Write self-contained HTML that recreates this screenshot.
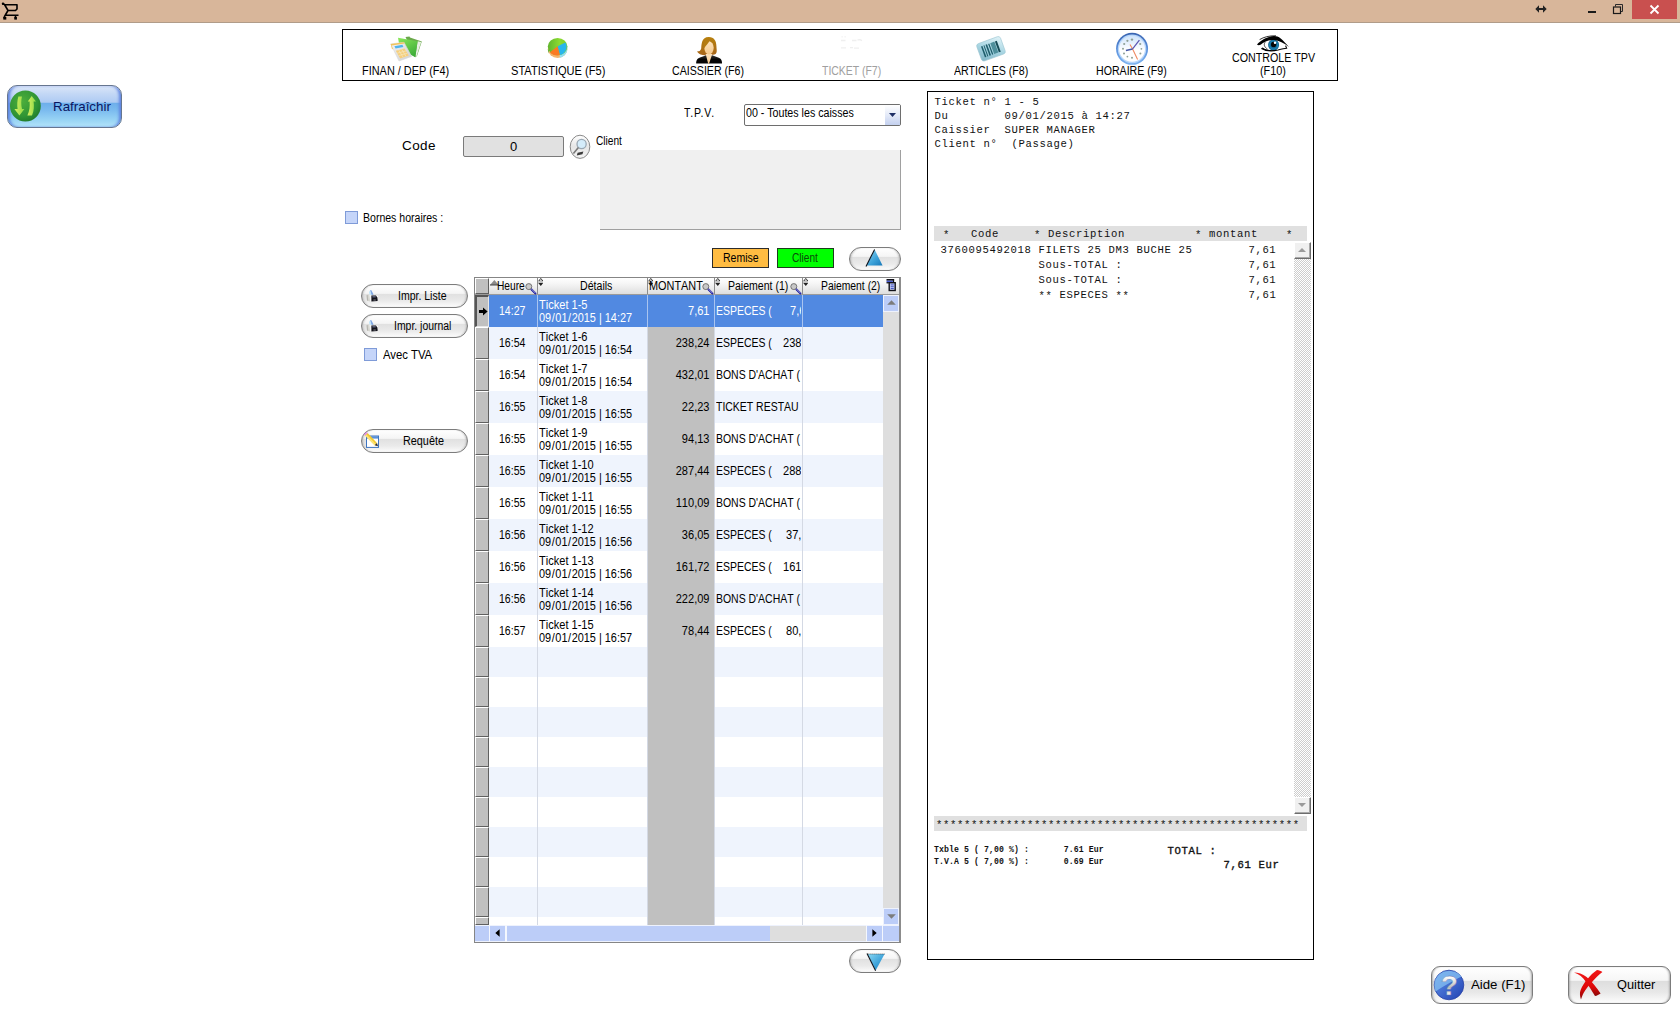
<!DOCTYPE html>
<html lang="fr">
<head>
<meta charset="utf-8">
<title>Tickets</title>
<style>
html,body{margin:0;padding:0;}
body{width:1680px;height:1010px;position:relative;overflow:hidden;background:#fff;
  font-family:"Liberation Sans",sans-serif;font-size:11px;color:#000;}
.abs{position:absolute;}
.t{position:absolute;white-space:pre;line-height:14px;transform-origin:0 50%;}
.tc{position:absolute;white-space:pre;line-height:14px;text-align:center;}
/* title bar */
#titlebar{position:absolute;left:0;top:0;width:1680px;height:22px;background:#d8b69a;border-bottom:1px solid #b09c89;}
#closebtn{position:absolute;left:1632px;top:0;width:45px;height:19px;background:#c9504f;}
/* toolbar */
#toolbar{position:absolute;left:342px;top:29px;width:994px;height:50px;border:1px solid #000;}
.tbl{position:absolute;white-space:pre;line-height:13px;font-size:11px;text-align:center;transform:translateX(-50%);}
/* pill buttons */
.pill{position:absolute;border:1px solid #7c7c7c;border-radius:13px;box-sizing:border-box;
  background:linear-gradient(#ffffff 0%,#f5f5f5 38%,#e1e1e1 43%,#eaeaea 72%,#fcfcfc 100%);
  box-shadow:inset 2px 0 2px -1px #b8b8b8,inset -2px 0 2px -1px #b8b8b8;}
.chk{position:absolute;width:11px;height:11px;border:1px solid #7f9bd8;background:#c5d5f9;}
/* grid */
#grid{position:absolute;left:474px;top:277px;width:424px;height:664px;border:1px solid #858585;border-right:2px solid #8c8c8c;background:#fff;overflow:hidden;}
.row{position:absolute;left:15px;width:394px;}
.rh{position:absolute;left:0;width:14px;background:#c0c0c0;box-sizing:border-box;border-top:1px solid #fff;border-left:1px solid #fff;border-right:1px solid #606060;border-bottom:1px solid #606060;}
.c{position:absolute;white-space:pre;line-height:13px;font-size:12px;transform:scaleX(0.92);transform-origin:0 50%;font-kerning:none;}
.cr{transform-origin:100% 50%;text-align:right;}
.sl{margin:0 .65px;}
/* receipt */
#receipt{position:absolute;left:927px;top:91px;width:385px;height:867px;border:1px solid #000;background:#fff;}
.s{position:relative;top:1.3px;}
.m{position:absolute;white-space:pre;font-family:"Liberation Mono",monospace;font-size:10.6px;letter-spacing:0.64px;line-height:14px;color:#111;}
</style>
</head>
<body>
<div id="titlebar">
  <svg class="abs" style="left:1px;top:2px" width="19" height="18" viewBox="0 0 19 18">
    <path d="M1.5 1.5 L3.5 2.5 L7 8.5 L3.5 14.5 L3 16.5 M3.5 2.8 H16 V7 L14.5 8.5 H7 M4.5 13.2 H17.5 M14.5 13.5 V16.8" fill="none" stroke="#000" stroke-width="1.6" stroke-linejoin="round"/>
    <rect x="2.3" y="15" width="3" height="2.6" fill="#000"/><rect x="13.3" y="15" width="2.6" height="2.6" fill="#000"/>
    <circle cx="2" cy="1.8" r="1.2" fill="#000"/>
  </svg>
  <svg class="abs" style="left:1535px;top:4px" width="12" height="10" viewBox="0 0 12 10">
    <path d="M0.3 5 L4 1.3 V3.9 H8 V1.3 L11.7 5 L8 8.7 V6.1 H4 V8.7 Z" fill="#222"/>
  </svg>
  <div class="abs" style="left:1588px;top:11px;width:8px;height:2px;background:#1a1a1a"></div>
  <svg class="abs" style="left:1612px;top:3px" width="12" height="12" viewBox="0 0 12 12">
    <path d="M3.5 3.5 V1.5 H10.5 V8.5 H8.5" fill="none" stroke="#2a2a2a" stroke-width="1"/>
    <rect x="1.5" y="4" width="7" height="6.5" fill="none" stroke="#1a1a1a" stroke-width="1.2"/>
  </svg>
  <div id="closebtn">
    <svg class="abs" style="left:17px;top:4px" width="11" height="11" viewBox="0 0 11 11"><path d="M1.5 1.5 L9.5 9.5 M9.5 1.5 L1.5 9.5" stroke="#fff" stroke-width="1.8" fill="none"/></svg>
  </div>
</div>
<div id="toolbar"></div>
<!-- finan icon: origin 380,30 -->
<svg class="abs" style="left:380px;top:30px" width="60" height="36" viewBox="0 0 60 36">
  <defs>
    <linearGradient id="gfold" x1="0" y1="0" x2="0.6" y2="1"><stop offset="0" stop-color="#8be85a"/><stop offset="1" stop-color="#3fae3a"/></linearGradient>
    <linearGradient id="gcalc" x1="0" y1="0" x2="1" y2="1"><stop offset="0" stop-color="#f4f4f4"/><stop offset="1" stop-color="#cfcfcf"/></linearGradient>
  </defs>
  <path d="M25.5 7 L29.5 6.6 L30 7.6 L41.8 11.6 L37 26 L35 27.3 Z" fill="#6aa84a"/>
  <path d="M37.6 11.3 L41.2 12 L36.8 25.6 L35.3 27 Z" fill="#e8efe4"/>
  <path d="M18 7.7 L37.6 11.3 L35.3 27.3 L33 26 L20 19 Z" fill="url(#gfold)"/>
  <path d="M10.7 13.9 L24 12.3 L31.6 26.4 L19 31 Z" fill="url(#gcalc)" stroke="#d8d8d8" stroke-width="0.6"/>
  <path d="M10.7 13.9 L24 12.3 L24.6 13.4 L11.6 15.4 L13 19 L12 19.3 Z" fill="#f2c45a"/>
  <path d="M14.4 16.2 L22.4 14.7 L23.4 17 L15.6 18.6 Z" fill="#4fb4ee"/>
  <path d="M15.8 20.8 L24.6 18.6 L28.8 25.4 L20.2 28.4 Z" fill="#f6cf7c"/>
  <path d="M17.2 23.2 L26 20.9 M18.7 25.6 L27.4 23.2 M18.7 20.1 L23.2 27.4 M21.7 19.3 L26 26.4" stroke="#f4e6c0" stroke-width="0.7" fill="none"/>
</svg>
<!-- pie icon: origin 535,32 -->
<svg class="abs" style="left:535px;top:32px" width="50" height="30" viewBox="0 0 50 30">
  <defs><linearGradient id="ggrn" x1="0" y1="0" x2="1" y2="0"><stop offset="0" stop-color="#5fb52e"/><stop offset="0.6" stop-color="#8cdb30"/><stop offset="1" stop-color="#7acc2c"/></linearGradient></defs>
  <ellipse cx="22.6" cy="16.9" rx="9.8" ry="9" fill="#f4b46c"/>
  <path d="M24.8 25.8 A9.8 9 0 0 0 32.4 16.9 L32.4 14 L24.8 22 Z" fill="#93e0f0"/>
  <path d="M12.8 16.9 A9.8 9 0 0 0 14 21.4 L14 18 Z" fill="#6aae3a"/>
  <ellipse cx="22.6" cy="14.6" rx="9.8" ry="8.7" fill="url(#ggrn)"/>
  <path d="M22.6 14.2 L30.4 10.6 A9.8 8.7 0 0 1 24.8 23.1 Z" fill="#29b6ec"/>
  <path d="M22.6 14.2 L24.8 23.1 A9.8 8.7 0 0 1 15 20.2 Z" fill="#fb7a22"/>
</svg>
<!-- woman icon: origin 684,32 -->
<svg class="abs" style="left:684px;top:32px" width="50" height="34" viewBox="0 0 50 34">
  <defs>
    <linearGradient id="ghair" x1="0" y1="0" x2="0" y2="1"><stop offset="0" stop-color="#b8810e"/><stop offset="1" stop-color="#a8661a"/></linearGradient>
    <linearGradient id="gskin" x1="0" y1="0" x2="0" y2="1"><stop offset="0" stop-color="#fde2bd"/><stop offset="1" stop-color="#f5c98c"/></linearGradient>
    <linearGradient id="gsuit" x1="0" y1="0" x2="0" y2="1"><stop offset="0" stop-color="#3a3a3a"/><stop offset="0.5" stop-color="#050505"/></linearGradient>
  </defs>
  <path d="M24.6 5 C30 4.8 32.4 9 32.4 14 C32.6 18 33.4 20 31.6 22 C29 23.4 26 23 24 23 C21 23.4 18.6 23.2 16.6 22.4 C14.6 21.6 13.6 20.4 13.2 19.2 C15 19.6 16.6 18.6 17.2 16.4 C17.6 12 17.6 5.2 24.6 5 Z" fill="url(#ghair)"/>
  <path d="M12.2 31.6 C12 29.6 12.6 27.6 14 26.4 C16.6 25 19.6 24.2 22 23.2 L28.2 23.2 C30.6 24.2 33.6 25 36.2 26.4 C37.6 27.6 38.2 29.6 38 31.6 Z" fill="url(#gsuit)"/>
  <path d="M21.6 22 L28.4 22 L27.6 24 L25 31.8 L24.2 31.8 L22.2 24 Z" fill="url(#gskin)"/>
  <ellipse cx="25" cy="15.8" rx="4.7" ry="6.6" fill="url(#gskin)"/>
  <path d="M20 16.6 C19.2 12 20.4 8 24.2 7 C27 6.8 29 8 30.2 12 C28 10.4 26.4 9.4 25.6 8.8 C24.4 11 22.4 13 20 16.6 Z" fill="#b47c12"/>
</svg>
<!-- ticket (disabled) icon faint -->
<svg class="abs" style="left:838px;top:34px" width="28" height="18" viewBox="0 0 28 18">
  <path d="M3 6.5 H7.5 M14 6.5 H18.5 M19.5 6 L22 5.6 L24 6.6 M3 13.9 H8 M12 13.6 H15 M16 14.2 H21" stroke="#efefef" stroke-width="1.3" fill="none"/>
  <path d="M3.4 2.8 H5 M6.4 2.8 H8" stroke="#f6f6f6" stroke-width="1.4" fill="none"/>
</svg>
<!-- barcode icon: origin 966,30 -->
<svg class="abs" style="left:966px;top:30px" width="50" height="36" viewBox="0 0 50 36">
  <defs><linearGradient id="gbar" x1="1" y1="0" x2="0" y2="1"><stop offset="0" stop-color="#e4f5fa"/><stop offset="0.5" stop-color="#a9d6e3"/><stop offset="1" stop-color="#7fb4c6"/></linearGradient></defs>
  <g transform="translate(25 18.8) rotate(-20)">
    <rect x="-12.6" y="-9.2" width="25.2" height="18.4" rx="2.6" fill="url(#gbar)" stroke="#9cc6d2" stroke-width="0.6"/>
    <g fill="#1d5d6b">
      <rect x="-8.6" y="-5.6" width="1.5" height="11.6"/><rect x="-6" y="-5.6" width="1" height="11.6"/>
      <rect x="-3.8" y="-5.6" width="1.6" height="11.6"/><rect x="-1" y="-5.6" width="1.2" height="11.6"/>
      <rect x="1.2" y="-5.6" width="4.4" height="11.6" fill="#4e8f9c"/><rect x="6.2" y="-5.6" width="2" height="11.6" fill="#174c58"/>
    </g>
  </g>
</svg>
<!-- clock icon: origin 1108,30 -->
<svg class="abs" style="left:1108px;top:30px" width="50" height="36" viewBox="0 0 50 36">
  <defs>
    <linearGradient id="gring" x1="0" y1="0" x2="0" y2="1"><stop offset="0" stop-color="#3863b0"/><stop offset="0.5" stop-color="#5a90dc"/><stop offset="1" stop-color="#7db4f0"/></linearGradient>
    <linearGradient id="gface" x1="0" y1="0" x2="0" y2="1"><stop offset="0" stop-color="#cfe4fb"/><stop offset="0.55" stop-color="#ffffff"/></linearGradient>
  </defs>
  <circle cx="24.05" cy="18.85" r="16" fill="url(#gring)"/>
  <circle cx="24.05" cy="18.85" r="14.3" fill="#b7d6fa"/>
  <circle cx="24.05" cy="18.85" r="13" fill="url(#gface)"/>
  <g fill="#8fa096">
    <circle cx="24" cy="9.6" r="1.2"/><circle cx="19.4" cy="10.8" r="1.1"/><circle cx="16.2" cy="14" r="1.1"/><circle cx="15" cy="18.8" r="1"/>
    <circle cx="16" cy="23.4" r="1"/><circle cx="19.4" cy="26.6" r="0.9"/><circle cx="24" cy="27.8" r="1"/><circle cx="32.4" cy="23.6" r="1"/>
    <circle cx="33.4" cy="18.8" r="0.9"/><circle cx="32.2" cy="14" r="1.1"/>
  </g>
  <path d="M22 14.4 L24.6 19 L29.6 29.6" stroke="#f08a62" stroke-width="1.1" fill="none"/>
  <path d="M24.6 18.9 L17.9 20.4" stroke="#4657a6" stroke-width="1.5" fill="none"/>
  <path d="M24.6 18.9 L31.4 10.2" stroke="#5a52b0" stroke-width="1.2" fill="none"/>
</svg>
<!-- eye icon: origin 1248,30 -->
<svg class="abs" style="left:1248px;top:30.7px" width="50" height="24" viewBox="0 0 50 24">
  <defs><radialGradient id="giris" cx="0.5" cy="0.5" r="0.5"><stop offset="0.35" stop-color="#0b4f78"/><stop offset="0.75" stop-color="#1b83b4"/><stop offset="1" stop-color="#0c5a86"/></radialGradient></defs>
  <circle cx="25.6" cy="14" r="5.5" fill="url(#giris)"/>
  <circle cx="25.6" cy="13.4" r="2.6" fill="#050505"/>
  <circle cx="27" cy="11.8" r="1.2" fill="#fff"/>
  <path d="M9 13.4 C13 9.4 19 5.4 26 5 C31 5 34 8 41 16 C36 12 31 9.4 26 9 C20 8.8 16 11 12.6 13.8 C11 14.4 9.6 14.2 9 13.4 Z" fill="#000"/>
  <path d="M11.6 8.6 C16 6 21 4.6 28 4.8" stroke="#000" stroke-width="0.8" fill="none"/>
  <path d="M17.6 10.6 C15.4 13 16 16 19.4 18" stroke="#222" stroke-width="0.8" fill="none"/>
  <path d="M13.4 17.4 C18 20 24 20.4 30 19 C33 18.2 36 17.4 38.6 17.2 L37.6 14.6" stroke="#000" stroke-width="1.1" fill="none"/>
  <path d="M13.4 17.2 C17 20.4 24 20.6 28 19.4 C23 19.6 18 19 14.6 16.6 Z" fill="#000"/>
</svg>
<div class="t" id="tb1" style="left:361.89px;top:64px;font-size:12px;transform:scaleX(0.9101)">FINAN / DEP (F4)</div>
<div class="t" id="tb2" style="left:511.25px;top:64px;font-size:12px;transform:scaleX(0.9233)">STATISTIQUE (F5)</div>
<div class="t" id="tb3" style="left:672.35px;top:64px;font-size:12px;transform:scaleX(0.8860)">CAISSIER (F6)</div>
<div class="t" id="tb4" style="left:821.62px;top:64px;font-size:12px;color:#a0a0a0;transform:scaleX(0.8722)">TICKET (F7)</div>
<div class="t" id="tb5" style="left:954.23px;top:64px;font-size:12px;transform:scaleX(0.8867)">ARTICLES (F8)</div>
<div class="t" id="tb6" style="left:1096.49px;top:64px;font-size:12px;transform:scaleX(0.8838)">HORAIRE (F9)</div>
<div class="t" id="tb7" style="left:1231.57px;top:51px;font-size:12px;transform:scaleX(0.8915)">CONTROLE TPV</div>
<div class="t" id="tb8" style="left:1259.70px;top:64px;font-size:12px;transform:scaleX(0.9065)">(F10)</div>
<div class="abs" id="refresh" style="left:7px;top:85px;width:115px;height:43px;box-sizing:border-box;border:1px solid #66768f;border-radius:10px;
  background:linear-gradient(#dbe6f8 0%,#c2d7f5 20%,#aecbf3 40%,#6daeea 41%,#7cbcef 60%,#9bd6f5 85%,#b4e4f9 100%);
  box-shadow:inset 3px 0 3px -1px #5f84e0,inset -3px 0 3px -1px #5f84e0,inset 0 1px 0 #eef3fb;">
  <svg class="abs" style="left:1px;top:3px" width="36" height="36" viewBox="0 0 36 36">
    <defs><radialGradient id="ggc" cx="0.4" cy="0.35" r="0.7"><stop offset="0" stop-color="#4cae3c"/><stop offset="0.7" stop-color="#2f9434"/><stop offset="1" stop-color="#1f7a2a"/></radialGradient>
    <linearGradient id="garr" x1="0" y1="0" x2="1" y2="0"><stop offset="0" stop-color="#d6f060"/><stop offset="1" stop-color="#8ed848"/></linearGradient></defs>
    <circle cx="16.4" cy="17" r="15.4" fill="url(#ggc)"/>
    <path d="M9.4 7.4 L13 7.4 C12 11 12 16 13 20 L15.4 20 L10.4 26.4 L5.4 20 L8.6 20 C8 16 8.2 11 9.4 7.4 Z" fill="url(#garr)"/>
    <path d="M22.7 7 L27 12.4 L24.6 12.4 C25.2 17 25 22 23 26.4 L18.4 26.4 C20.6 22 21 17 20.6 12.4 L18.8 12.4 Z" fill="url(#garr)"/>
  </svg>
  <div class="t" id="t_raf" style="left:45.10px;top:13px;font-size:13px;color:#0b155f;line-height:15px;transform:scaleX(1.0263)">Rafraîchir</div>
</div>
<div class="pill" style="left:361px;top:284px;width:107px;height:24px"><svg class="abs" style="left:3px;top:4px" width="16" height="16" viewBox="0 0 16 16">
    <path d="M5 1.6 L6.2 1 L8.6 5.6 L6.6 6.2 Z" fill="#7fa6e4"/><path d="M4 3 L5 1.6 L6.6 6.2 L4.6 6 Z" fill="#bfe4f8"/>
    <path d="M1.6 6.2 L4.4 5.6 L5.2 12.4 L2 11.6 Z" fill="#d6d6d0"/><path d="M1.6 6.2 L2.6 5.8 L3.2 11.8 L2 11.6 Z" fill="#b4b4ae"/>
    <path d="M4.4 5.6 L6.6 6.2 L6.4 12.6 L5.2 12.4 Z" fill="#f2f2f2"/>
    <path d="M6.4 6.6 L11 6.4 L12.6 8.4 L12.6 12 L6.4 12.6 Z" fill="#14141c"/>
    <path d="M7.4 7 L10.6 6.9 L10.8 8.4 L7.4 8.6 Z" fill="#5a5f78"/>
    <rect x="8.4" y="10.4" width="2.4" height="1.2" fill="#6a6a72"/>
    <path d="M11 6.2 L13 7 L13 10.4 L12.6 8.4 Z" fill="#fff"/>
  </svg>
  <div class="t" id="t_il" style="left:35.92px;top:4px;font-size:12px;transform:scaleX(0.8758)">Impr. Liste</div>
</div>
<div class="pill" style="left:361px;top:314px;width:107px;height:24px"><svg class="abs" style="left:3px;top:4px" width="16" height="16" viewBox="0 0 16 16">
    <path d="M5 1.6 L6.2 1 L8.6 5.6 L6.6 6.2 Z" fill="#7fa6e4"/><path d="M4 3 L5 1.6 L6.6 6.2 L4.6 6 Z" fill="#bfe4f8"/>
    <path d="M1.6 6.2 L4.4 5.6 L5.2 12.4 L2 11.6 Z" fill="#d6d6d0"/><path d="M1.6 6.2 L2.6 5.8 L3.2 11.8 L2 11.6 Z" fill="#b4b4ae"/>
    <path d="M4.4 5.6 L6.6 6.2 L6.4 12.6 L5.2 12.4 Z" fill="#f2f2f2"/>
    <path d="M6.4 6.6 L11 6.4 L12.6 8.4 L12.6 12 L6.4 12.6 Z" fill="#14141c"/>
    <path d="M7.4 7 L10.6 6.9 L10.8 8.4 L7.4 8.6 Z" fill="#5a5f78"/>
    <rect x="8.4" y="10.4" width="2.4" height="1.2" fill="#6a6a72"/>
    <path d="M11 6.2 L13 7 L13 10.4 L12.6 8.4 Z" fill="#fff"/>
  </svg>
  <div class="t" id="t_ij" style="left:31.92px;top:4px;font-size:12px;transform:scaleX(0.8694)">Impr. journal</div>
</div>
<div class="chk" style="left:364px;top:348px"></div>
<div class="t" id="t_tva" style="left:382.89px;top:348px;font-size:12px;transform:scaleX(0.9455)">Avec TVA</div>
<div class="pill" style="left:361px;top:429px;width:107px;height:24px">
  <svg class="abs" style="left:1px;top:1px" width="20" height="20" viewBox="0 0 20 20">
    <rect x="3.5" y="5" width="12" height="11.4" fill="#fff" stroke="#3c74c0" stroke-width="1"/>
    <rect x="4" y="5.2" width="11" height="2.4" fill="#5a90d8"/>
    <path d="M2 4.4 L4.6 2 L14 12 L11.6 14.2 Z" fill="#f4c92e"/>
    <path d="M2 4.4 L3.3 3.2 L12.8 13.1 L11.6 14.2 Z" fill="#fbe47a"/>
    <path d="M1 3.2 L3.4 1 L4.6 2 L2 4.4 Z" fill="#e68ae0"/>
    <path d="M14 12 L15 15.2 L11.6 14.2 Z" fill="#2a2a2a"/>
  </svg>
  <div class="t" id="t_req" style="left:40.78px;top:4px;font-size:12px;transform:scaleX(0.9024)">Requête</div>
</div>
<div class="t" id="t_tpv" style="left:684.31px;top:106px;font-size:12px;letter-spacing:1px;transform:scaleX(0.8795)">T.P.V.</div>
<div class="abs" style="left:744px;top:104px;width:157px;height:22px;box-sizing:border-box;border:1px solid #6e6e6e;border-radius:2px;background:#fff">
  <div class="abs" style="left:140px;top:0;width:15px;height:20px;background:linear-gradient(#ffffff,#e4eaf8 50%,#c3d0ef)"></div>
  <svg class="abs" style="left:144px;top:8px" width="7" height="4" viewBox="0 0 7 4"><path d="M0 0 H7 L3.5 4 Z" fill="#1e2f66"/></svg>
  <div class="t" id="t_combo" style="left:0.79px;top:1px;font-size:12px;transform:scaleX(0.8898)">00 - Toutes les caisses</div>
</div>
<div class="t" id="t_code" style="left:401.70px;top:138px;font-size:13.5px;line-height:16px;letter-spacing:0.4px;transform:scaleX(0.9997)">Code</div>
<div class="abs" style="left:463px;top:136px;width:101px;height:21px;box-sizing:border-box;border:1px solid #7a7a7a;border-radius:2px;background:#e1e1e1"></div>
<div class="t" id="t_zero" style="left:510px;top:139px;font-size:13px;line-height:15px">0</div>
<svg class="abs" style="left:568px;top:134px" width="26" height="26" viewBox="0 0 26 26">
  <defs><linearGradient id="gmag" x1="0" y1="0" x2="0" y2="1"><stop offset="0" stop-color="#ffffff"/><stop offset="0.5" stop-color="#e6e6e6"/><stop offset="1" stop-color="#f4f4f4"/></linearGradient></defs>
  <ellipse cx="12" cy="12.8" rx="9.8" ry="11.6" fill="url(#gmag)" stroke="#8a8a8a" stroke-width="1"/>
  <circle cx="13.6" cy="10" r="4.6" fill="#d4ecfa" stroke="#9aa8b4" stroke-width="1.3"/>
  <path d="M10.4 13.6 L5.4 19.6" stroke="#7a7a7a" stroke-width="1.6"/>
  <path d="M9.6 18.8 L15.4 17.4 L14.4 20.2 L8.8 21.4 Z" fill="#3a3a3a"/>
</svg>
<div class="t" id="t_client" style="left:596.46px;top:134px;font-size:12px;transform:scaleX(0.8434)">Client</div>
<div class="abs" style="left:600px;top:150px;width:301px;height:80px;box-sizing:border-box;background:#f0f0f0;border-right:1px solid #a0a0a0;border-bottom:1px solid #a0a0a0"></div>
<div class="chk" style="left:345px;top:211px"></div>
<div class="t" id="t_bornes" style="left:362.89px;top:211px;font-size:12px;transform:scaleX(0.8778)">Bornes horaires :</div>
<div class="abs" style="left:712px;top:248px;width:57px;height:20px;box-sizing:border-box;border:1px solid #2c2c2c;background:#ffbc42"></div>
<div class="t" id="t_remise" style="left:723.21px;top:251px;font-size:12px;transform:scaleX(0.8776)">Remise</div>
<div class="abs" style="left:777px;top:248px;width:57px;height:20px;box-sizing:border-box;border:1px solid #1c3c1c;background:#00ff00"></div>
<div class="t" id="t_client2" style="left:791.85px;top:251px;font-size:12px;color:#0b4a0b;transform:scaleX(0.8435)">Client</div>
<div class="pill" style="left:849px;top:247px;width:52px;height:24px">
  <svg class="abs" style="left:14px;top:0" width="24" height="22" viewBox="0 0 24 22">
    <defs><linearGradient id="gtri" x1="0" y1="0" x2="1" y2="1"><stop offset="0" stop-color="#8ad8f4"/><stop offset="0.6" stop-color="#3aa0d8"/><stop offset="1" stop-color="#1878b8"/></linearGradient></defs>
    <path d="M10.6 1.6 L18.6 17.6 L2.4 17.6 Z" fill="url(#gtri)"/>
    <path d="M10.6 1.4 L2 18.4" stroke="#10141c" stroke-width="1.1"/>
  </svg>
</div>
<div class="pill" style="left:849px;top:949px;width:52px;height:24px">
  <svg class="abs" style="left:14px;top:0" width="24" height="22" viewBox="0 0 24 22">
    <path d="M3.6 4 L20.6 4 L11.6 20.6 Z" fill="url(#gtri)"/>
    <path d="M3 3.6 L11.6 20.8" stroke="#10141c" stroke-width="1.1"/>
    <path d="M3.6 4 L20.6 4" stroke="#333" stroke-width="0.8" stroke-dasharray="1 1"/>
  </svg>
</div>
<!--GRIDSTART-->
<div id="grid">
<div class="abs" style="left:0;top:0;width:424px;height:16px;background:linear-gradient(#ffffff,#f4f4f4 40%,#dedede);border-bottom:1px solid #9a9a9a"></div>
<div class="rh" style="top:0;height:16px"></div>
<div class="abs" style="left:62px;top:0;width:1px;height:16px;background:#8c8c8c"></div>
<div class="abs" style="left:172px;top:0;width:1px;height:16px;background:#8c8c8c"></div>
<div class="abs" style="left:239px;top:0;width:1px;height:16px;background:#8c8c8c"></div>
<div class="abs" style="left:327px;top:0;width:1px;height:16px;background:#8c8c8c"></div>
<svg class="abs" style="left:62.6px;top:0.2px" width="5.6" height="8.4" viewBox="0 0 6 9"><path d="M3 0 L6 3.4 H0 Z M0 5 H6 L3 8.6 Z" fill="#222"/><path d="M3 1.2 L4.6 3 H1.4 Z" fill="#fff"/></svg>
<svg class="abs" style="left:172.6px;top:0.2px" width="5.6" height="8.4" viewBox="0 0 6 9"><path d="M3 0 L6 3.4 H0 Z M0 5 H6 L3 8.6 Z" fill="#222"/><path d="M3 1.2 L4.6 3 H1.4 Z" fill="#fff"/></svg>
<svg class="abs" style="left:239.6px;top:0.2px" width="5.6" height="8.4" viewBox="0 0 6 9"><path d="M3 0 L6 3.4 H0 Z M0 5 H6 L3 8.6 Z" fill="#222"/><path d="M3 1.2 L4.6 3 H1.4 Z" fill="#fff"/></svg>
<svg class="abs" style="left:327.6px;top:0.2px" width="5.6" height="8.4" viewBox="0 0 6 9"><path d="M3 0 L6 3.4 H0 Z M0 5 H6 L3 8.6 Z" fill="#222"/><path d="M3 1.2 L4.6 3 H1.4 Z" fill="#fff"/></svg>
<svg class="abs" style="left:15px;top:2px" width="9" height="6" viewBox="0 0 9 6"><path d="M4.4 0 L8.8 5 H0 Z" fill="#8a8a8a"/><path d="M0 5 H9" stroke="#444" stroke-width="1"/></svg>
<svg class="abs" style="left:50px;top:4px" width="12" height="13" viewBox="0 0 12 13"><circle cx="3.8" cy="4.6" r="3" fill="#c8c8c8" stroke="#6a6a6a" stroke-width="0.9"/><path d="M6 7 L11 12" stroke="#1a1aa0" stroke-width="2"/><path d="M6.6 7.2 L10.6 11.2" stroke="#fff" stroke-width="0.6"/></svg>
<svg class="abs" style="left:227px;top:4px" width="12" height="13" viewBox="0 0 12 13"><circle cx="3.8" cy="4.6" r="3" fill="#c8c8c8" stroke="#6a6a6a" stroke-width="0.9"/><path d="M6 7 L11 12" stroke="#1a1aa0" stroke-width="2"/><path d="M6.6 7.2 L10.6 11.2" stroke="#fff" stroke-width="0.6"/></svg>
<svg class="abs" style="left:315px;top:4px" width="12" height="13" viewBox="0 0 12 13"><circle cx="3.8" cy="4.6" r="3" fill="#c8c8c8" stroke="#6a6a6a" stroke-width="0.9"/><path d="M6 7 L11 12" stroke="#1a1aa0" stroke-width="2"/><path d="M6.6 7.2 L10.6 11.2" stroke="#fff" stroke-width="0.6"/></svg>
<div class="c" id="h_heure" style="left:22.4px;top:2px;transform:scaleX(0.85)">Heure</div>
<div class="c" id="h_det" style="left:105.4px;top:2px;transform:scaleX(0.884)">Détails</div>
<div class="c" id="h_mont" style="left:174.1px;top:2px;transform:scaleX(0.908)">MONTANT</div>
<div class="c" id="h_p1" style="left:252.8px;top:2px;transform:scaleX(0.877)">Paiement (1)</div>
<div class="c" id="h_p2" style="left:346.3px;top:2px;transform:scaleX(0.863)">Paiement (2)</div>
<svg class="abs" style="left:410.5px;top:1px" width="11" height="13" viewBox="0 0 11 13"><rect x="0.5" y="0" width="7.6" height="1.7" fill="#101018"/><rect x="6.8" y="0" width="1.3" height="3.4" fill="#101018"/><rect x="0.5" y="1.7" width="6.3" height="1.4" fill="#4a5cd4"/><rect x="0.5" y="3.1" width="2.6" height="1.3" fill="#101018"/><rect x="3.2" y="3.7" width="6" height="7.8" fill="#c6cef6" stroke="#101018" stroke-width="1.4"/><path d="M4.7 5.9 H7.8 M4.7 7.7 H7.8 M4.7 9.5 H7.8" stroke="#3a4cc0" stroke-width="0.9"/></svg>
<div class="abs" style="left:14px;top:17px;width:394px;height:32px;background:#5189e1"></div>
<div class="rh" style="top:17px;height:32px;border-top:2px solid #555;border-left:2px solid #555;border-right:1px solid #e8e8e8;border-bottom:1px solid #e8e8e8"></div>
<svg class="abs" style="left:4px;top:29px" width="9" height="9" viewBox="0 0 9 9"><path d="M0 3 H4 V0.4 L8.6 4.5 L4 8.6 V6 H0 Z" fill="#000"/></svg>
<div class="abs" style="left:14px;top:49px;width:394px;height:32px;background:#eff4fd"></div>
<div class="rh" style="top:49px;height:32px"></div>
<div class="abs" style="left:14px;top:81px;width:394px;height:32px;background:#ffffff"></div>
<div class="rh" style="top:81px;height:32px"></div>
<div class="abs" style="left:14px;top:113px;width:394px;height:32px;background:#eff4fd"></div>
<div class="rh" style="top:113px;height:32px"></div>
<div class="abs" style="left:14px;top:145px;width:394px;height:32px;background:#ffffff"></div>
<div class="rh" style="top:145px;height:32px"></div>
<div class="abs" style="left:14px;top:177px;width:394px;height:32px;background:#eff4fd"></div>
<div class="rh" style="top:177px;height:32px"></div>
<div class="abs" style="left:14px;top:209px;width:394px;height:32px;background:#ffffff"></div>
<div class="rh" style="top:209px;height:32px"></div>
<div class="abs" style="left:14px;top:241px;width:394px;height:32px;background:#eff4fd"></div>
<div class="rh" style="top:241px;height:32px"></div>
<div class="abs" style="left:14px;top:273px;width:394px;height:32px;background:#ffffff"></div>
<div class="rh" style="top:273px;height:32px"></div>
<div class="abs" style="left:14px;top:305px;width:394px;height:32px;background:#eff4fd"></div>
<div class="rh" style="top:305px;height:32px"></div>
<div class="abs" style="left:14px;top:337px;width:394px;height:32px;background:#ffffff"></div>
<div class="rh" style="top:337px;height:32px"></div>
<div class="abs" style="left:14px;top:369px;width:394px;height:30px;background:#eff4fd"></div>
<div class="rh" style="top:369px;height:30px"></div>
<div class="abs" style="left:14px;top:399px;width:394px;height:30px;background:#ffffff"></div>
<div class="rh" style="top:399px;height:30px"></div>
<div class="abs" style="left:14px;top:429px;width:394px;height:30px;background:#eff4fd"></div>
<div class="rh" style="top:429px;height:30px"></div>
<div class="abs" style="left:14px;top:459px;width:394px;height:30px;background:#ffffff"></div>
<div class="rh" style="top:459px;height:30px"></div>
<div class="abs" style="left:14px;top:489px;width:394px;height:30px;background:#eff4fd"></div>
<div class="rh" style="top:489px;height:30px"></div>
<div class="abs" style="left:14px;top:519px;width:394px;height:30px;background:#ffffff"></div>
<div class="rh" style="top:519px;height:30px"></div>
<div class="abs" style="left:14px;top:549px;width:394px;height:30px;background:#eff4fd"></div>
<div class="rh" style="top:549px;height:30px"></div>
<div class="abs" style="left:14px;top:579px;width:394px;height:30px;background:#ffffff"></div>
<div class="rh" style="top:579px;height:30px"></div>
<div class="abs" style="left:14px;top:609px;width:394px;height:30px;background:#eff4fd"></div>
<div class="rh" style="top:609px;height:30px"></div>
<div class="abs" style="left:14px;top:639px;width:394px;height:8px;background:#ffffff"></div>
<div class="rh" style="top:639px;height:8px"></div>
<div class="abs" style="left:173px;top:49px;width:66px;height:598px;background:#c0c0c0"></div>
<div class="abs" style="left:62px;top:17px;width:1px;height:630px;background:#d4d9e4"></div>
<div class="abs" style="left:62px;top:17px;width:1px;height:32px;background:#a9c4f0"></div>
<div class="abs" style="left:172px;top:17px;width:1px;height:630px;background:#d4d9e4"></div>
<div class="abs" style="left:172px;top:17px;width:1px;height:32px;background:#a9c4f0"></div>
<div class="abs" style="left:239px;top:17px;width:1px;height:630px;background:#d4d9e4"></div>
<div class="abs" style="left:239px;top:17px;width:1px;height:32px;background:#a9c4f0"></div>
<div class="abs" style="left:327px;top:17px;width:1px;height:630px;background:#d4d9e4"></div>
<div class="abs" style="left:327px;top:17px;width:1px;height:32px;background:#a9c4f0"></div>
<div class="c" style="left:23.7px;top:27px;color:#fff;transform:scaleX(0.88)" id="r0a">14:27</div>
<div class="c" style="left:64px;top:21px;color:#fff" id="r0b">Ticket 1-5</div>
<div class="c" style="left:64px;top:34px;color:#fff;transform:scaleX(0.908)" id="r0c">09<span class="sl">/</span>01<span class="sl">/</span>2015 | 14:27</div>
<div class="c cr" style="left:173px;width:61.5px;top:27px;color:#fff" id="r0d">7,61</div>
<div class="abs" style="left:240px;top:27px;width:85.5px;height:14px;overflow:hidden"><div class="c" style="left:1.2px;top:0;color:#fff;transform:scaleX(0.872)" id="r0e">ESPECES (</div><div class="c" style="left:75.0px;top:0;color:#fff" id="r0f">7,6</div></div>
<div class="c" style="left:23.7px;top:59px;color:#000;transform:scaleX(0.88)" id="r1a">16:54</div>
<div class="c" style="left:64px;top:53px;color:#000" id="r1b">Ticket 1-6</div>
<div class="c" style="left:64px;top:66px;color:#000;transform:scaleX(0.908)" id="r1c">09<span class="sl">/</span>01<span class="sl">/</span>2015 | 16:54</div>
<div class="c cr" style="left:173px;width:61.5px;top:59px;color:#000" id="r1d">238,24</div>
<div class="abs" style="left:240px;top:59px;width:85.5px;height:14px;overflow:hidden"><div class="c" style="left:1.2px;top:0;color:#000;transform:scaleX(0.872)" id="r1e">ESPECES (</div><div class="c" style="left:67.7px;top:0;color:#000" id="r1f">238</div></div>
<div class="c" style="left:23.7px;top:91px;color:#000;transform:scaleX(0.88)" id="r2a">16:54</div>
<div class="c" style="left:64px;top:85px;color:#000" id="r2b">Ticket 1-7</div>
<div class="c" style="left:64px;top:98px;color:#000;transform:scaleX(0.908)" id="r2c">09<span class="sl">/</span>01<span class="sl">/</span>2015 | 16:54</div>
<div class="c cr" style="left:173px;width:61.5px;top:91px;color:#000" id="r2d">432,01</div>
<div class="abs" style="left:240px;top:91px;width:85.5px;height:14px;overflow:hidden"><div class="c" style="left:1.2px;top:0;color:#000;transform:scaleX(0.872)" id="r2e">BONS D'ACHAT (</div></div>
<div class="c" style="left:23.7px;top:123px;color:#000;transform:scaleX(0.88)" id="r3a">16:55</div>
<div class="c" style="left:64px;top:117px;color:#000" id="r3b">Ticket 1-8</div>
<div class="c" style="left:64px;top:130px;color:#000;transform:scaleX(0.908)" id="r3c">09<span class="sl">/</span>01<span class="sl">/</span>2015 | 16:55</div>
<div class="c cr" style="left:173px;width:61.5px;top:123px;color:#000" id="r3d">22,23</div>
<div class="abs" style="left:240px;top:123px;width:85.5px;height:14px;overflow:hidden"><div class="c" style="left:1.2px;top:0;color:#000;transform:scaleX(0.872)" id="r3e">TICKET RESTAU</div></div>
<div class="c" style="left:23.7px;top:155px;color:#000;transform:scaleX(0.88)" id="r4a">16:55</div>
<div class="c" style="left:64px;top:149px;color:#000" id="r4b">Ticket 1-9</div>
<div class="c" style="left:64px;top:162px;color:#000;transform:scaleX(0.908)" id="r4c">09<span class="sl">/</span>01<span class="sl">/</span>2015 | 16:55</div>
<div class="c cr" style="left:173px;width:61.5px;top:155px;color:#000" id="r4d">94,13</div>
<div class="abs" style="left:240px;top:155px;width:85.5px;height:14px;overflow:hidden"><div class="c" style="left:1.2px;top:0;color:#000;transform:scaleX(0.872)" id="r4e">BONS D'ACHAT (</div></div>
<div class="c" style="left:23.7px;top:187px;color:#000;transform:scaleX(0.88)" id="r5a">16:55</div>
<div class="c" style="left:64px;top:181px;color:#000" id="r5b">Ticket 1-10</div>
<div class="c" style="left:64px;top:194px;color:#000;transform:scaleX(0.908)" id="r5c">09<span class="sl">/</span>01<span class="sl">/</span>2015 | 16:55</div>
<div class="c cr" style="left:173px;width:61.5px;top:187px;color:#000" id="r5d">287,44</div>
<div class="abs" style="left:240px;top:187px;width:85.5px;height:14px;overflow:hidden"><div class="c" style="left:1.2px;top:0;color:#000;transform:scaleX(0.872)" id="r5e">ESPECES (</div><div class="c" style="left:67.7px;top:0;color:#000" id="r5f">288</div></div>
<div class="c" style="left:23.7px;top:219px;color:#000;transform:scaleX(0.88)" id="r6a">16:55</div>
<div class="c" style="left:64px;top:213px;color:#000" id="r6b">Ticket 1-11</div>
<div class="c" style="left:64px;top:226px;color:#000;transform:scaleX(0.908)" id="r6c">09<span class="sl">/</span>01<span class="sl">/</span>2015 | 16:55</div>
<div class="c cr" style="left:173px;width:61.5px;top:219px;color:#000" id="r6d">110,09</div>
<div class="abs" style="left:240px;top:219px;width:85.5px;height:14px;overflow:hidden"><div class="c" style="left:1.2px;top:0;color:#000;transform:scaleX(0.872)" id="r6e">BONS D'ACHAT (</div></div>
<div class="c" style="left:23.7px;top:251px;color:#000;transform:scaleX(0.88)" id="r7a">16:56</div>
<div class="c" style="left:64px;top:245px;color:#000" id="r7b">Ticket 1-12</div>
<div class="c" style="left:64px;top:258px;color:#000;transform:scaleX(0.908)" id="r7c">09<span class="sl">/</span>01<span class="sl">/</span>2015 | 16:56</div>
<div class="c cr" style="left:173px;width:61.5px;top:251px;color:#000" id="r7d">36,05</div>
<div class="abs" style="left:240px;top:251px;width:85.5px;height:14px;overflow:hidden"><div class="c" style="left:1.2px;top:0;color:#000;transform:scaleX(0.872)" id="r7e">ESPECES (</div><div class="c" style="left:70.5px;top:0;color:#000" id="r7f">37,</div></div>
<div class="c" style="left:23.7px;top:283px;color:#000;transform:scaleX(0.88)" id="r8a">16:56</div>
<div class="c" style="left:64px;top:277px;color:#000" id="r8b">Ticket 1-13</div>
<div class="c" style="left:64px;top:290px;color:#000;transform:scaleX(0.908)" id="r8c">09<span class="sl">/</span>01<span class="sl">/</span>2015 | 16:56</div>
<div class="c cr" style="left:173px;width:61.5px;top:283px;color:#000" id="r8d">161,72</div>
<div class="abs" style="left:240px;top:283px;width:85.5px;height:14px;overflow:hidden"><div class="c" style="left:1.2px;top:0;color:#000;transform:scaleX(0.872)" id="r8e">ESPECES (</div><div class="c" style="left:67.7px;top:0;color:#000" id="r8f">161</div></div>
<div class="c" style="left:23.7px;top:315px;color:#000;transform:scaleX(0.88)" id="r9a">16:56</div>
<div class="c" style="left:64px;top:309px;color:#000" id="r9b">Ticket 1-14</div>
<div class="c" style="left:64px;top:322px;color:#000;transform:scaleX(0.908)" id="r9c">09<span class="sl">/</span>01<span class="sl">/</span>2015 | 16:56</div>
<div class="c cr" style="left:173px;width:61.5px;top:315px;color:#000" id="r9d">222,09</div>
<div class="abs" style="left:240px;top:315px;width:85.5px;height:14px;overflow:hidden"><div class="c" style="left:1.2px;top:0;color:#000;transform:scaleX(0.872)" id="r9e">BONS D'ACHAT (</div></div>
<div class="c" style="left:23.7px;top:347px;color:#000;transform:scaleX(0.88)" id="r10a">16:57</div>
<div class="c" style="left:64px;top:341px;color:#000" id="r10b">Ticket 1-15</div>
<div class="c" style="left:64px;top:354px;color:#000;transform:scaleX(0.908)" id="r10c">09<span class="sl">/</span>01<span class="sl">/</span>2015 | 16:57</div>
<div class="c cr" style="left:173px;width:61.5px;top:347px;color:#000" id="r10d">78,44</div>
<div class="abs" style="left:240px;top:347px;width:85.5px;height:14px;overflow:hidden"><div class="c" style="left:1.2px;top:0;color:#000;transform:scaleX(0.872)" id="r10e">ESPECES (</div><div class="c" style="left:70.5px;top:0;color:#000" id="r10f">80,</div></div>
<div class="abs" style="left:408px;top:17px;width:16px;height:630px;background:#dedede"></div>
<div class="abs" style="left:408px;top:17px;width:16px;height:17px;background:#bccdf8;box-sizing:border-box;border:1px solid #eef2fd"></div>
<svg class="abs" style="left:412px;top:22px" width="9" height="5" viewBox="0 0 9 5"><path d="M4.5 0.2 L8.8 4.8 H0.2 Z" fill="#7c7c7c"/></svg>
<div class="abs" style="left:408px;top:630px;width:16px;height:17px;background:#bccdf8;box-sizing:border-box;border:1px solid #eef2fd"></div>
<svg class="abs" style="left:412px;top:636px" width="9" height="5" viewBox="0 0 9 5"><path d="M0.2 0.2 H8.8 L4.5 4.8 Z" fill="#7c7c7c"/></svg>
<div class="abs" style="left:0;top:647px;width:424px;height:17px;background:#bccdf8;box-sizing:border-box;border-top:1px solid #eef2fd;border-bottom:1px solid #eef2fd"></div>
<div class="abs" style="left:295px;top:648px;width:96px;height:15px;background:#dedede"></div>
<div class="abs" style="left:14px;top:647px;width:1px;height:17px;background:#f4f7fe"></div>
<div class="abs" style="left:30px;top:647px;width:2px;height:17px;background:#f4f7fe"></div>
<div class="abs" style="left:391px;top:647px;width:1px;height:17px;background:#f4f7fe"></div>
<div class="abs" style="left:407px;top:647px;width:1px;height:17px;background:#f4f7fe"></div>
<svg class="abs" style="left:20px;top:651px" width="5" height="8" viewBox="0 0 5 8"><path d="M4.6 0.2 V7.8 L0.3 4 Z" fill="#000"/></svg>
<svg class="abs" style="left:396.5px;top:651px" width="5" height="8" viewBox="0 0 5 8"><path d="M0.4 0.2 V7.8 L4.7 4 Z" fill="#000"/></svg>
</div>
<!--GRIDEND-->
<div id="receipt">
<div class="m" style="left:6.5px;top:3px">Ticket n° 1 - 5</div>
<div class="m" style="left:6.5px;top:17px">Du        09/01/2015 à 14:27</div>
<div class="m" style="left:6.5px;top:31px">Caissier  SUPER MANAGER</div>
<div class="m" style="left:6.5px;top:45px">Client n°  (Passage)</div>
<div class="abs" style="left:6px;top:134px;width:373px;height:15px;background:#e0e0e0"></div>
<div class="m" style="left:8px;top:134.5px"> <span class="s">*</span>   Code     <span class="s">*</span> Description          <span class="s">*</span> montant    <span class="s">*</span></div>
<div class="m" style="left:12.5px;top:150.5px">3760095492018 FILETS 25 DM3 BUCHE 25        7,61</div>
<div class="m" style="left:12.5px;top:165.5px">              Sous-TOTAL :                  7,61</div>
<div class="m" style="left:12.5px;top:180.5px">              Sous-TOTAL :                  7,61</div>
<div class="m" style="left:12.5px;top:195.5px">              <span class="s">**</span> ESPECES <span class="s">**</span>                 7,61</div>
<div class="abs" style="left:366px;top:150px;width:17px;height:572px;background-color:#f4f4f4;background-image:conic-gradient(#cdcdcd 25%,#fff 0 50%,#cdcdcd 0 75%,#fff 0);background-size:2px 2px"></div>
<div class="abs" style="left:366px;top:150px;width:17px;height:17px;box-sizing:border-box;background:#f0f0f0;border-top:1px solid #fff;border-left:1px solid #fff;border-right:1px solid #6d6d6d;border-bottom:1px solid #6d6d6d;box-shadow:inset -1px -1px 0 #a8a8a8"></div>
<svg class="abs" style="left:370px;top:156px" width="8" height="4" viewBox="0 0 8 4"><path d="M4 0 L8 4 H0 Z" fill="#9a9a9a"/></svg>
<div class="abs" style="left:366px;top:705px;width:17px;height:17px;box-sizing:border-box;background:#f0f0f0;border-top:1px solid #fff;border-left:1px solid #fff;border-right:1px solid #6d6d6d;border-bottom:1px solid #6d6d6d;box-shadow:inset -1px -1px 0 #a8a8a8"></div>
<svg class="abs" style="left:370px;top:711px" width="8" height="4" viewBox="0 0 8 4"><path d="M0 0 H8 L4 4 Z" fill="#9a9a9a"/></svg>
<div class="abs" style="left:6px;top:724px;width:373px;height:15px;background:#e0e0e0"></div>
<div class="m" style="left:8px;top:726px">****************************************************</div>
<div class="m" id="m_s1" style="left:6px;top:752px;font-size:8.2px;font-weight:bold;letter-spacing:0.08px;line-height:12px">Txble 5 ( 7,00 %) :       7.61 Eur</div>
<div class="m" id="m_s2" style="left:6px;top:764px;font-size:8.2px;font-weight:bold;letter-spacing:0.08px;line-height:12px">T.V.A 5 ( 7,00 %) :       0.69 Eur</div>
<div class="m" style="left:239.5px;top:751.5px;-webkit-text-stroke:0.35px #111">TOTAL :</div>
<div class="m" style="left:295.5px;top:765.5px;-webkit-text-stroke:0.35px #111">7,61 Eur</div>
</div>
<div class="abs" style="left:1431px;top:966px;width:102px;height:38px;box-sizing:border-box;border:1px solid #7c7c7c;border-radius:9px;
  background:linear-gradient(#ffffff 0%,#f6f6f6 37%,#dedede 40%,#e8e8e8 70%,#fdfdfd 100%);box-shadow:inset 2px 0 2px -1px #b0b0b0,inset -2px 0 2px -1px #b0b0b0">
  <svg class="abs" style="left:1px;top:2px" width="34" height="34" viewBox="0 0 34 34">
    <defs><linearGradient id="ghelp" x1="0" y1="0" x2="1" y2="1"><stop offset="0" stop-color="#5f94e4"/><stop offset="0.5" stop-color="#426cd0"/><stop offset="1" stop-color="#2240b0"/></linearGradient>
    <linearGradient id="gq" x1="0" y1="0" x2="0" y2="1"><stop offset="0.2" stop-color="#ffffff"/><stop offset="0.55" stop-color="#bdbdbd"/><stop offset="0.8" stop-color="#f4f4f4"/></linearGradient></defs>
    <circle cx="16" cy="16" r="14.8" fill="url(#ghelp)" stroke="#2a42a6" stroke-width="0.8"/>
    <path d="M2.6 22.4 C9 18.6 21 11 28.6 7.6 C24 1.6 13 -0.4 6 5.6 C1 10.4 0.4 17 2.6 22.4 Z" fill="#86c0f2" opacity="0.75"/>
    <text x="16.2" y="26.4" text-anchor="middle" font-family="Liberation Sans, sans-serif" font-weight="bold" font-size="28" fill="url(#gq)" stroke="#5a6aa8" stroke-width="0.3">?</text>
  </svg>
  <div class="t" id="t_aide" style="left:39.21px;top:10px;font-size:13px;line-height:16px;transform:scaleX(1.0176)">Aide (F1)</div>
</div>
<div class="abs" style="left:1568px;top:966px;width:103px;height:38px;box-sizing:border-box;border:1px solid #7c7c7c;border-radius:9px;
  background:linear-gradient(#ffffff 0%,#f6f6f6 37%,#dedede 40%,#e8e8e8 70%,#fdfdfd 100%);box-shadow:inset 2px 0 2px -1px #b0b0b0,inset -2px 0 2px -1px #b0b0b0">
  <svg class="abs" style="left:2px;top:1px" width="34" height="34" viewBox="0 0 34 34">
    <defs><linearGradient id="gx" x1="0" y1="0" x2="0" y2="1"><stop offset="0" stop-color="#f01818"/><stop offset="0.6" stop-color="#e00808"/><stop offset="1" stop-color="#8a0a0a"/></linearGradient></defs>
    <path d="M3 4.6 C8 6 12 9.6 15 14 C17.6 17.6 20.6 22.6 24 28 C26 27.6 28 26.6 29.6 25.4 C25.6 19.6 21 13.4 15.6 9 C11.6 6 7 4.6 3 4.6 Z" fill="url(#gx)"/>
    <path d="M26 2 C28 2.4 30 3 31.4 4 C24 10 17 18 12.6 25 C11.6 27 10.6 29.6 10 31.6 C9 28.6 8.4 25 9.6 22 C13 14 19 7 26 2 Z" fill="url(#gx)"/>
  </svg>
  <div class="t" id="t_quit" style="left:47.95px;top:10px;font-size:13px;line-height:16px;transform:scaleX(0.9838)">Quitter</div>
</div>
</body>
</html>
